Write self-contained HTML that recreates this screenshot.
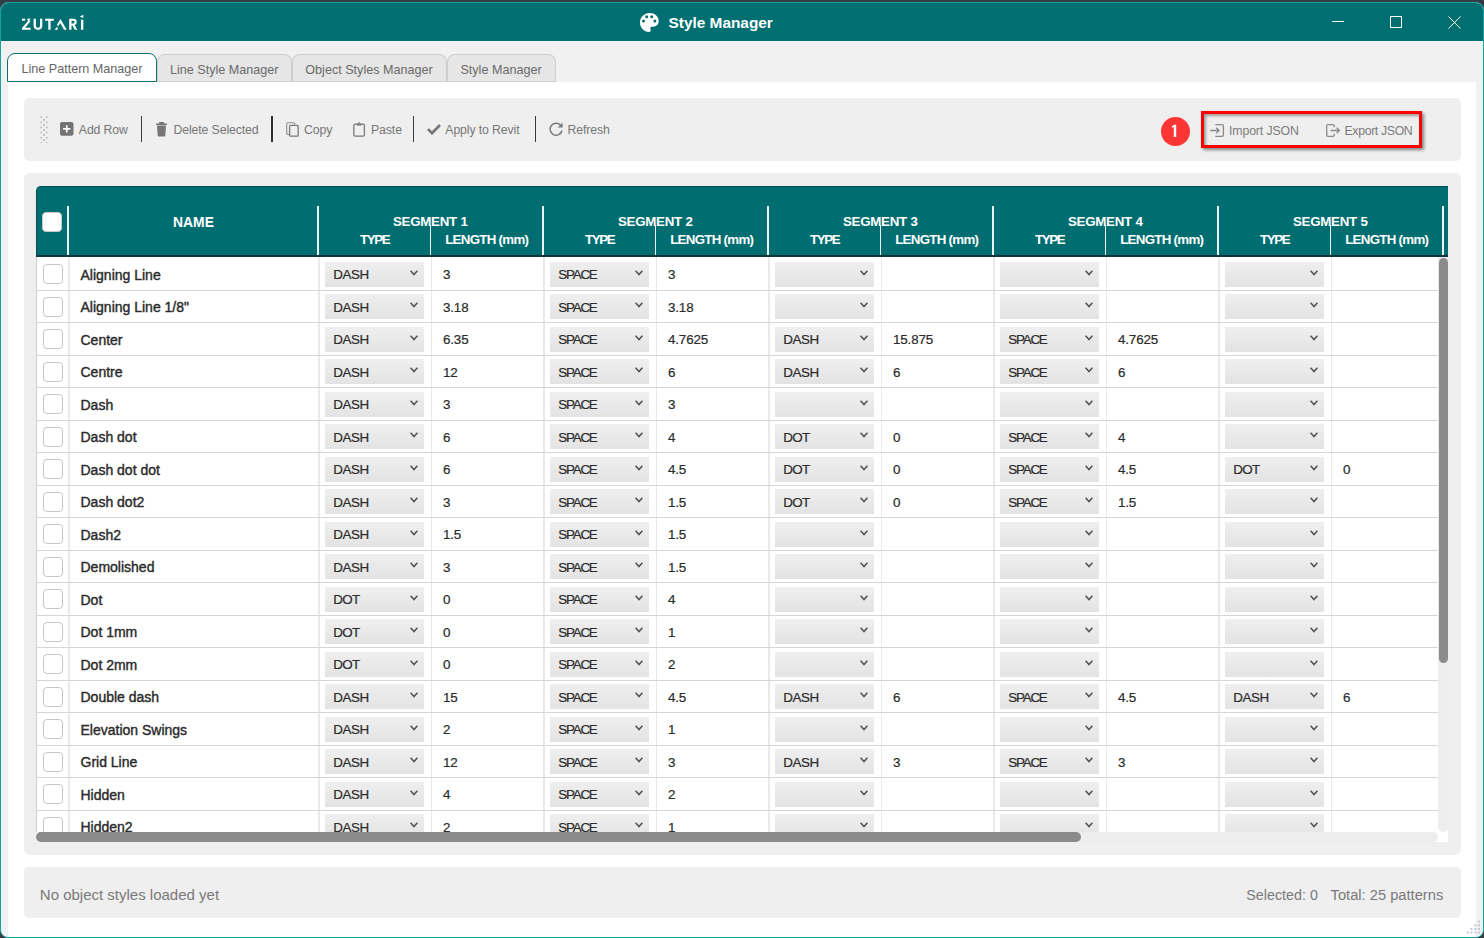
<!DOCTYPE html>
<html><head><meta charset="utf-8"><title>Style Manager</title>
<style>
*{box-sizing:border-box}
html,body{margin:0;padding:0}
body{width:1484px;height:938px;overflow:hidden;background:#363b44;position:relative;font-family:"Liberation Sans",sans-serif}
.abs{position:absolute}
#frame{position:absolute;left:0;top:2px;width:1484px;height:936px;border:1px solid #12a5a0;border-radius:8px;background:#f1f1f1;overflow:hidden}
#title{position:absolute;left:0;top:0;width:1482px;height:37.6px;background:#006f72}
.ttext{position:absolute;left:668.5px;top:13.8px;font-size:15.4px;font-weight:700;color:#fff;white-space:nowrap;line-height:18px}
.logo{position:absolute;left:21.5px;top:14.5px;font-size:15px;font-weight:700;color:#fff;letter-spacing:2.2px;line-height:18px}
.tab{position:absolute;top:53.5px;height:28px;background:#e6e6e6;border:1px solid #cdcdcd;border-bottom:1px solid #cfcfcf;border-radius:8px 8px 0 0;color:#6a6a6a;font-size:12.6px;white-space:nowrap;line-height:30.2px;text-align:center}
.tab.sel{background:#fff;border:1.3px solid #0b7072;top:53px;height:29px;color:#666}
#panel{position:absolute;left:7px;top:79px;width:1468px;height:856px;background:#fff}
.gp{position:absolute;left:24px;width:1436px;background:#efefef;border-radius:5px}
.tb{position:absolute;top:121.8px;font-size:12.3px;letter-spacing:-0.12px;color:#777;white-space:nowrap;line-height:16px}
.sep{position:absolute;top:116px;width:1.2px;height:26px;background:#3a3a3a}
#hdr{position:absolute;left:36.0px;top:186px;width:1412.0px;height:71px;background:#006e71;border-top:1.3px solid #0c4d52;border-left:1px solid #0c4d52;border-bottom:2px solid #10343c;border-radius:5px 0 0 0;overflow:hidden}
.ht{position:absolute;text-align:center;color:#fff;font-weight:700;font-size:13px;line-height:14px;white-space:nowrap}
.hvl{position:absolute;width:1.5px;background:#eaf3f3}
.hcb{position:absolute;left:5.200000000000003px;top:24.69999999999999px;width:20px;height:20px;background:#fff;border:1px solid #c8c8c8;border-radius:4px}
#body{position:absolute;left:36.0px;top:257px;width:1402.0px;height:575px;background:#fff;overflow:hidden}
.row{position:absolute;left:0;width:1402.0px;height:32.5px;border-bottom:1.2px solid #d6d6d6}
.vl{position:absolute;top:0;width:1.5px;height:575px;background:#e9e9e9}
.cb{position:absolute;width:20px;height:20px;border:1px solid #c6c6c6;border-radius:4px;background:#fff}
.nm{position:absolute;top:8.8px;font-size:14px;letter-spacing:0px;font-weight:400;color:#2b2b2b;-webkit-text-stroke:0.4px #2b2b2b;white-space:nowrap;line-height:16px}
.dd{position:absolute;top:3.8px;width:99px;height:25px;background:linear-gradient(#efefef,#e3e3e3)}
.dd span{position:absolute;left:8.2px;top:5.3px;font-size:13.4px;color:#2b2b2b;-webkit-text-stroke:0.2px #2b2b2b;line-height:16px}
.chev{position:absolute;left:85px;top:7.8px}
.ln{position:absolute;top:9.1px;font-size:13.4px;color:#2b2b2b;-webkit-text-stroke:0.2px #2b2b2b;letter-spacing:-0.15px;line-height:16px;white-space:nowrap}
.st{position:absolute;top:886.2px;font-size:15px;color:#7a7a7a;white-space:nowrap;line-height:18px}
</style></head><body>
<div id="frame">
  <div id="title"></div>
  <div id="panel"></div>
</div>
<svg style="position:absolute;left:639.8px;top:12.8px" width="19" height="19" viewBox="0 0 19 19"><path fill="#fff" fill-rule="evenodd" d="M9.5 0C14.7 0 18.7 3.4 18.7 7.8C18.7 11.3 16.5 13.7 13 13.7L11.6 13.7C10.8 13.7 10.3 14.2 10.3 15C10.3 15.6 10.7 16.3 10.7 17.3C10.7 18.5 10 19 9 19C4 19 0 14.7 0 9.5C0 4.3 4.3 0 9.5 0Z M8.2 3.8A1.5 1.5 0 1 0 5.2 3.8A1.5 1.5 0 1 0 8.2 3.8Z M13.2 3.8A1.5 1.5 0 1 0 10.2 3.8A1.5 1.5 0 1 0 13.2 3.8Z M5 8A1.5 1.5 0 1 0 2 8A1.5 1.5 0 1 0 5 8Z M16.4 8A1.5 1.5 0 1 0 13.4 8A1.5 1.5 0 1 0 16.4 8Z"/></svg>
<svg class="abs" style="left:0;top:0" width="100" height="40" viewBox="0 0 100 40"><g fill="#fff">
<rect x="22" y="18.7" width="3.2" height="2"/>
<path d="M26.9 18.7H30.6L28.7 21.8Z"/>
<path d="M30.6 20.9L25.2 27.7H30.6V29.8H22V28.1L27.9 20.9Z"/>
<path d="M33.6 18.7H35.9V25.8Q35.9 27.7 37.95 27.7Q40 27.7 40 25.8V18.7H42.3V25.8Q42.3 29.9 37.95 29.9Q33.6 29.9 33.6 25.8Z"/>
<path d="M45.1 18.7H53.8V20.8H50.6V29.8H48.3V20.8H45.1Z"/>
<path d="M54.6 29.8H57.9L57.3 26.5Z"/>
<path d="M60.5 18.9L66.7 29.8H64.1L60.2 22.9L58.1 26.3L57 24.6Z"/>
<path d="M69.2 18.7H73.4Q76.8 18.7 76.8 21.9Q76.8 24.3 74.6 25.1L77.3 29.8H74.8L72.5 25.4H71.5V29.8H69.2ZM71.5 20.7V23.4H73.3Q74.5 23.4 74.5 22.05Q74.5 20.7 73.3 20.7Z"/>
<rect x="81" y="19.7" width="2.3" height="10.1"/>
<path d="M83.3 14.7V18.1L79.8 16.6Z"/>
</g></svg>
<div class="ttext">Style Manager</div>
<div class="abs" style="left:1332px;top:20.8px;width:12px;height:1px;background:#fff"></div>
<div class="abs" style="left:1390px;top:16px;width:12px;height:12px;border:1px solid #fff"></div>
<svg class="abs" style="left:1447.5px;top:15.5px" width="13" height="13" viewBox="0 0 13 13"><path d="M0.5 0.5L12.5 12.5M12.5 0.5L0.5 12.5" stroke="#fff" stroke-width="1"/></svg>

<div class="tab" style="left:157px;width:134.5px">Line Style Manager</div>
<div class="tab" style="left:291.5px;width:155px">Object Styles Manager</div>
<div class="tab" style="left:446.5px;width:109px">Style Manager</div>
<div class="tab sel" style="left:7px;width:150px">Line Pattern Manager</div>

<div class="gp" style="top:98px;height:62.5px;width:1436.5px"></div>
<div class="gp" style="top:173px;height:681.5px;width:1436.8px;border-radius:6px"></div>
<div class="gp" style="top:867.2px;height:50.5px;width:1436.5px"></div>

<!-- toolbar -->
<svg class="abs" style="left:40px;top:116px" width="8" height="27" viewBox="0 0 8 27">
<rect x="0.5" y="0.5" width="1.5" height="1.5" fill="#b5b5b5"/><rect x="6" y="0.5" width="1.5" height="1.5" fill="#b5b5b5"/><rect x="3.5" y="3.05" width="1.5" height="1.5" fill="#b5b5b5"/><rect x="3.5" y="3.05" width="1.5" height="1.5" fill="#b5b5b5"/><rect x="0.5" y="5.6" width="1.5" height="1.5" fill="#b5b5b5"/><rect x="6" y="5.6" width="1.5" height="1.5" fill="#b5b5b5"/><rect x="3.5" y="8.149999999999999" width="1.5" height="1.5" fill="#b5b5b5"/><rect x="3.5" y="8.149999999999999" width="1.5" height="1.5" fill="#b5b5b5"/><rect x="0.5" y="10.7" width="1.5" height="1.5" fill="#b5b5b5"/><rect x="6" y="10.7" width="1.5" height="1.5" fill="#b5b5b5"/><rect x="3.5" y="13.25" width="1.5" height="1.5" fill="#b5b5b5"/><rect x="3.5" y="13.25" width="1.5" height="1.5" fill="#b5b5b5"/><rect x="0.5" y="15.799999999999999" width="1.5" height="1.5" fill="#b5b5b5"/><rect x="6" y="15.799999999999999" width="1.5" height="1.5" fill="#b5b5b5"/><rect x="3.5" y="18.349999999999998" width="1.5" height="1.5" fill="#b5b5b5"/><rect x="3.5" y="18.349999999999998" width="1.5" height="1.5" fill="#b5b5b5"/><rect x="0.5" y="20.9" width="1.5" height="1.5" fill="#b5b5b5"/><rect x="6" y="20.9" width="1.5" height="1.5" fill="#b5b5b5"/><rect x="3.5" y="23.45" width="1.5" height="1.5" fill="#b5b5b5"/><rect x="3.5" y="23.45" width="1.5" height="1.5" fill="#b5b5b5"/><rect x="0.5" y="26.0" width="1.5" height="1.5" fill="#b5b5b5"/><rect x="6" y="26.0" width="1.5" height="1.5" fill="#b5b5b5"/>
</svg>
<svg class="abs" style="left:60px;top:122px" width="14" height="14" viewBox="0 0 14 14"><rect x="0" y="0" width="13.5" height="13.7" rx="2" fill="#737373"/><path d="M6.75 3.2V10.5M3.1 6.85H10.4" stroke="#fff" stroke-width="1.6"/></svg>
<div class="tb" style="left:78.8px">Add Row</div>
<div class="sep" style="left:141px"></div>
<svg class="abs" style="left:156px;top:121.5px" width="12" height="15" viewBox="0 0 12 15"><path d="M0 2.2H11M3.8 2V0.8H7.2V2" stroke="#767676" stroke-width="1.4" fill="none"/><path d="M1 3.6H10L9.3 13.4Q9.2 14.5 8.2 14.5H2.8Q1.8 14.5 1.7 13.4Z" fill="#767676"/></svg>
<div class="tb" style="left:173.5px">Delete Selected</div>
<div class="sep" style="left:271px;width:2px;background:#2f2f2f"></div>
<svg class="abs" style="left:285.5px;top:121.5px" width="13" height="15" viewBox="0 0 13 15"><path d="M3.2 12.5H2Q0.7 12.5 0.7 11.2V2Q0.7 0.7 2 0.7H7.5Q8.8 0.7 8.8 2V2.8" fill="none" stroke="#8c8c8c" stroke-width="1.1"/><rect x="3.6" y="3.4" width="8.6" height="10.8" rx="1.3" fill="none" stroke="#7a7a7a" stroke-width="1.3"/></svg>
<div class="tb" style="left:304px">Copy</div>
<svg class="abs" style="left:353px;top:121.5px" width="13" height="15" viewBox="0 0 13 15"><rect x="0.8" y="2.2" width="10.6" height="11.9" rx="1.4" fill="none" stroke="#7a7a7a" stroke-width="1.3"/><path d="M3.8 1.6H8.4V3.6H3.8Z" fill="#7a7a7a"/><path d="M5.2 1.2Q6.1 0 7 1.2" stroke="#7a7a7a" stroke-width="1" fill="none"/></svg>
<div class="tb" style="left:371px">Paste</div>
<div class="sep" style="left:413px"></div>
<svg class="abs" style="left:426.5px;top:123.5px" width="14" height="11" viewBox="0 0 14 11"><path d="M1 5.2L5 9.2L13 1" fill="none" stroke="#757575" stroke-width="2.6"/></svg>
<div class="tb" style="left:445.3px">Apply to Revit</div>
<div class="sep" style="left:535px"></div>
<svg class="abs" style="left:548.5px;top:122.3px" width="15" height="15" viewBox="0 0 15 15"><path d="M12.3 4.2A6 6 0 1 0 13 8.5" fill="none" stroke="#7a7a7a" stroke-width="1.5"/><path d="M13.6 0.6V5.6H8.6Z" fill="#7a7a7a"/></svg>
<div class="tb" style="left:567.6px">Refresh</div>

<!-- import / export -->
<div class="abs" style="left:1160.8px;top:116.8px;width:29.5px;height:29.5px;border-radius:50%;background:#fd3535"></div>
<svg class="abs" style="left:1160px;top:116px" width="30" height="30" viewBox="0 0 30 30"><path fill="#fff" d="M13.8 8.7H16.2V21.1H13.8V11.1Q12.9 11.7 11.9 11.8V10.2Q13.2 9.9 13.8 8.7Z"/></svg>
<div class="abs" style="left:1201px;top:111px;width:221px;height:37px;border:3px solid #ff0000;box-shadow:2px 2px 3px rgba(0,0,0,.45), inset 2px 2px 3px rgba(0,0,0,.35)"></div>
<svg class="abs" style="left:1210px;top:123.5px" width="15" height="13" viewBox="0 0 15 13"><path d="M5.3 0.7H12Q13.4 0.7 13.4 2.1V10.9Q13.4 12.3 12 12.3H5.3" fill="none" stroke="#8a8a8a" stroke-width="1.3"/><path d="M0.2 6.5H9M6.3 3.7L9.1 6.5L6.3 9.3" fill="none" stroke="#8a8a8a" stroke-width="1.3"/></svg>
<div class="tb" style="left:1229px;top:122.6px;color:#7c7c7c">Import JSON</div>
<svg class="abs" style="left:1325.5px;top:123.5px" width="15" height="13" viewBox="0 0 15 13"><path d="M8.2 3.2V2.1Q8.2 0.7 6.8 0.7H2.1Q0.7 0.7 0.7 2.1V10.9Q0.7 12.3 2.1 12.3H6.8Q8.2 12.3 8.2 10.9V9.8" fill="none" stroke="#8a8a8a" stroke-width="1.3"/><path d="M4.6 6.5H13.4M10.7 3.7L13.5 6.5L10.7 9.3" fill="none" stroke="#8a8a8a" stroke-width="1.3"/></svg>
<div class="tb" style="left:1344.5px;top:122.6px;color:#7c7c7c;letter-spacing:-0.35px">Export JSON</div>

<!-- table header -->
<div id="hdr">
<div class="hcb"></div><div class="hvl" style="left:30.4px;top:18.69999999999999px;height:49.5px"></div><div class="ht" style="left:31.5px;width:250.0px;top:27.49999999999999px;font-size:13.9px">NAME</div><div class="hvl" style="left:280.4px;top:18.69999999999999px;height:49.5px"></div><div class="hvl" style="left:392.9px;top:38.19999999999999px;height:30.0px"></div><div class="ht" style="left:281.5px;width:225.0px;top:28.399999999999977px;font-size:13.3px;letter-spacing:-0.25px;text-indent:-1.5px">SEGMENT 1</div><div class="ht sub" style="left:281.5px;width:112.5px;top:46.19999999999999px;font-size:13.3px;letter-spacing:-1.3px;text-indent:-0.2px">TYPE</div><div class="ht sub" style="left:394.0px;width:112.5px;top:46.19999999999999px;font-size:13.3px;letter-spacing:-0.7px;text-indent:-1px">LENGTH (mm)</div><div class="hvl" style="left:505.4px;top:18.69999999999999px;height:49.5px"></div><div class="hvl" style="left:617.9px;top:38.19999999999999px;height:30.0px"></div><div class="ht" style="left:506.5px;width:225.0px;top:28.399999999999977px;font-size:13.3px;letter-spacing:-0.25px;text-indent:-1.5px">SEGMENT 2</div><div class="ht sub" style="left:506.5px;width:112.5px;top:46.19999999999999px;font-size:13.3px;letter-spacing:-1.3px;text-indent:-0.2px">TYPE</div><div class="ht sub" style="left:619.0px;width:112.5px;top:46.19999999999999px;font-size:13.3px;letter-spacing:-0.7px;text-indent:-1px">LENGTH (mm)</div><div class="hvl" style="left:730.4px;top:18.69999999999999px;height:49.5px"></div><div class="hvl" style="left:842.9px;top:38.19999999999999px;height:30.0px"></div><div class="ht" style="left:731.5px;width:225.0px;top:28.399999999999977px;font-size:13.3px;letter-spacing:-0.25px;text-indent:-1.5px">SEGMENT 3</div><div class="ht sub" style="left:731.5px;width:112.5px;top:46.19999999999999px;font-size:13.3px;letter-spacing:-1.3px;text-indent:-0.2px">TYPE</div><div class="ht sub" style="left:844.0px;width:112.5px;top:46.19999999999999px;font-size:13.3px;letter-spacing:-0.7px;text-indent:-1px">LENGTH (mm)</div><div class="hvl" style="left:955.4px;top:18.69999999999999px;height:49.5px"></div><div class="hvl" style="left:1067.9px;top:38.19999999999999px;height:30.0px"></div><div class="ht" style="left:956.5px;width:225.0px;top:28.399999999999977px;font-size:13.3px;letter-spacing:-0.25px;text-indent:-1.5px">SEGMENT 4</div><div class="ht sub" style="left:956.5px;width:112.5px;top:46.19999999999999px;font-size:13.3px;letter-spacing:-1.3px;text-indent:-0.2px">TYPE</div><div class="ht sub" style="left:1069.0px;width:112.5px;top:46.19999999999999px;font-size:13.3px;letter-spacing:-0.7px;text-indent:-1px">LENGTH (mm)</div><div class="hvl" style="left:1180.4px;top:18.69999999999999px;height:49.5px"></div><div class="hvl" style="left:1292.9px;top:38.19999999999999px;height:30.0px"></div><div class="ht" style="left:1181.5px;width:225.0px;top:28.399999999999977px;font-size:13.3px;letter-spacing:-0.25px;text-indent:-1.5px">SEGMENT 5</div><div class="ht sub" style="left:1181.5px;width:112.5px;top:46.19999999999999px;font-size:13.3px;letter-spacing:-1.3px;text-indent:-0.2px">TYPE</div><div class="ht sub" style="left:1294.0px;width:112.5px;top:46.19999999999999px;font-size:13.3px;letter-spacing:-0.7px;text-indent:-1px">LENGTH (mm)</div><div class="hvl" style="left:1405.4px;top:18.69999999999999px;height:49.5px"></div>
</div>
<!-- table body -->
<div id="body">
<div class="vl" style="left:0;width:1px;background:#d0d0d0"></div><div class="vl" style="left:32.0px"></div><div class="vl" style="left:282.0px"></div><div class="vl" style="left:394.5px"></div><div class="vl" style="left:507.0px"></div><div class="vl" style="left:619.5px"></div><div class="vl" style="left:732.0px"></div><div class="vl" style="left:844.5px"></div><div class="vl" style="left:957.0px"></div><div class="vl" style="left:1069.5px"></div><div class="vl" style="left:1182.0px"></div><div class="vl" style="left:1294.5px"></div><div class="vl" style="left:1407.0px"></div>
<div class="row" style="top:1.0px"><div class="cb" style="left:7.200000000000003px;top:6px"></div><div class="nm" style="left:44.5px">Aligning Line</div><div class="dd" style="left:289.0px"><span style="letter-spacing:-0.43px">DASH</span><svg class="chev" width="8" height="6" viewBox="0 0 8 6"><path d="M0.6 0.8 L4 4.6 L7.4 0.8" fill="none" stroke="#555" stroke-width="1.6"/></svg></div><div class="ln" style="left:407.0px">3</div><div class="dd" style="left:514.0px"><span style="letter-spacing:-1.2px">SPACE</span><svg class="chev" width="8" height="6" viewBox="0 0 8 6"><path d="M0.6 0.8 L4 4.6 L7.4 0.8" fill="none" stroke="#555" stroke-width="1.6"/></svg></div><div class="ln" style="left:632.0px">3</div><div class="dd" style="left:739.0px"><span style="letter-spacing:0px"></span><svg class="chev" width="8" height="6" viewBox="0 0 8 6"><path d="M0.6 0.8 L4 4.6 L7.4 0.8" fill="none" stroke="#555" stroke-width="1.6"/></svg></div><div class="dd" style="left:964.0px"><span style="letter-spacing:0px"></span><svg class="chev" width="8" height="6" viewBox="0 0 8 6"><path d="M0.6 0.8 L4 4.6 L7.4 0.8" fill="none" stroke="#555" stroke-width="1.6"/></svg></div><div class="dd" style="left:1189.0px"><span style="letter-spacing:0px"></span><svg class="chev" width="8" height="6" viewBox="0 0 8 6"><path d="M0.6 0.8 L4 4.6 L7.4 0.8" fill="none" stroke="#555" stroke-width="1.6"/></svg></div></div><div class="row" style="top:33.5px"><div class="cb" style="left:7.200000000000003px;top:6px"></div><div class="nm" style="left:44.5px">Aligning Line 1/8&quot;</div><div class="dd" style="left:289.0px"><span style="letter-spacing:-0.43px">DASH</span><svg class="chev" width="8" height="6" viewBox="0 0 8 6"><path d="M0.6 0.8 L4 4.6 L7.4 0.8" fill="none" stroke="#555" stroke-width="1.6"/></svg></div><div class="ln" style="left:407.0px">3.18</div><div class="dd" style="left:514.0px"><span style="letter-spacing:-1.2px">SPACE</span><svg class="chev" width="8" height="6" viewBox="0 0 8 6"><path d="M0.6 0.8 L4 4.6 L7.4 0.8" fill="none" stroke="#555" stroke-width="1.6"/></svg></div><div class="ln" style="left:632.0px">3.18</div><div class="dd" style="left:739.0px"><span style="letter-spacing:0px"></span><svg class="chev" width="8" height="6" viewBox="0 0 8 6"><path d="M0.6 0.8 L4 4.6 L7.4 0.8" fill="none" stroke="#555" stroke-width="1.6"/></svg></div><div class="dd" style="left:964.0px"><span style="letter-spacing:0px"></span><svg class="chev" width="8" height="6" viewBox="0 0 8 6"><path d="M0.6 0.8 L4 4.6 L7.4 0.8" fill="none" stroke="#555" stroke-width="1.6"/></svg></div><div class="dd" style="left:1189.0px"><span style="letter-spacing:0px"></span><svg class="chev" width="8" height="6" viewBox="0 0 8 6"><path d="M0.6 0.8 L4 4.6 L7.4 0.8" fill="none" stroke="#555" stroke-width="1.6"/></svg></div></div><div class="row" style="top:66.0px"><div class="cb" style="left:7.200000000000003px;top:6px"></div><div class="nm" style="left:44.5px">Center</div><div class="dd" style="left:289.0px"><span style="letter-spacing:-0.43px">DASH</span><svg class="chev" width="8" height="6" viewBox="0 0 8 6"><path d="M0.6 0.8 L4 4.6 L7.4 0.8" fill="none" stroke="#555" stroke-width="1.6"/></svg></div><div class="ln" style="left:407.0px">6.35</div><div class="dd" style="left:514.0px"><span style="letter-spacing:-1.2px">SPACE</span><svg class="chev" width="8" height="6" viewBox="0 0 8 6"><path d="M0.6 0.8 L4 4.6 L7.4 0.8" fill="none" stroke="#555" stroke-width="1.6"/></svg></div><div class="ln" style="left:632.0px">4.7625</div><div class="dd" style="left:739.0px"><span style="letter-spacing:-0.43px">DASH</span><svg class="chev" width="8" height="6" viewBox="0 0 8 6"><path d="M0.6 0.8 L4 4.6 L7.4 0.8" fill="none" stroke="#555" stroke-width="1.6"/></svg></div><div class="ln" style="left:857.0px">15.875</div><div class="dd" style="left:964.0px"><span style="letter-spacing:-1.2px">SPACE</span><svg class="chev" width="8" height="6" viewBox="0 0 8 6"><path d="M0.6 0.8 L4 4.6 L7.4 0.8" fill="none" stroke="#555" stroke-width="1.6"/></svg></div><div class="ln" style="left:1082.0px">4.7625</div><div class="dd" style="left:1189.0px"><span style="letter-spacing:0px"></span><svg class="chev" width="8" height="6" viewBox="0 0 8 6"><path d="M0.6 0.8 L4 4.6 L7.4 0.8" fill="none" stroke="#555" stroke-width="1.6"/></svg></div></div><div class="row" style="top:98.5px"><div class="cb" style="left:7.200000000000003px;top:6px"></div><div class="nm" style="left:44.5px">Centre</div><div class="dd" style="left:289.0px"><span style="letter-spacing:-0.43px">DASH</span><svg class="chev" width="8" height="6" viewBox="0 0 8 6"><path d="M0.6 0.8 L4 4.6 L7.4 0.8" fill="none" stroke="#555" stroke-width="1.6"/></svg></div><div class="ln" style="left:407.0px">12</div><div class="dd" style="left:514.0px"><span style="letter-spacing:-1.2px">SPACE</span><svg class="chev" width="8" height="6" viewBox="0 0 8 6"><path d="M0.6 0.8 L4 4.6 L7.4 0.8" fill="none" stroke="#555" stroke-width="1.6"/></svg></div><div class="ln" style="left:632.0px">6</div><div class="dd" style="left:739.0px"><span style="letter-spacing:-0.43px">DASH</span><svg class="chev" width="8" height="6" viewBox="0 0 8 6"><path d="M0.6 0.8 L4 4.6 L7.4 0.8" fill="none" stroke="#555" stroke-width="1.6"/></svg></div><div class="ln" style="left:857.0px">6</div><div class="dd" style="left:964.0px"><span style="letter-spacing:-1.2px">SPACE</span><svg class="chev" width="8" height="6" viewBox="0 0 8 6"><path d="M0.6 0.8 L4 4.6 L7.4 0.8" fill="none" stroke="#555" stroke-width="1.6"/></svg></div><div class="ln" style="left:1082.0px">6</div><div class="dd" style="left:1189.0px"><span style="letter-spacing:0px"></span><svg class="chev" width="8" height="6" viewBox="0 0 8 6"><path d="M0.6 0.8 L4 4.6 L7.4 0.8" fill="none" stroke="#555" stroke-width="1.6"/></svg></div></div><div class="row" style="top:131.0px"><div class="cb" style="left:7.200000000000003px;top:6px"></div><div class="nm" style="left:44.5px">Dash</div><div class="dd" style="left:289.0px"><span style="letter-spacing:-0.43px">DASH</span><svg class="chev" width="8" height="6" viewBox="0 0 8 6"><path d="M0.6 0.8 L4 4.6 L7.4 0.8" fill="none" stroke="#555" stroke-width="1.6"/></svg></div><div class="ln" style="left:407.0px">3</div><div class="dd" style="left:514.0px"><span style="letter-spacing:-1.2px">SPACE</span><svg class="chev" width="8" height="6" viewBox="0 0 8 6"><path d="M0.6 0.8 L4 4.6 L7.4 0.8" fill="none" stroke="#555" stroke-width="1.6"/></svg></div><div class="ln" style="left:632.0px">3</div><div class="dd" style="left:739.0px"><span style="letter-spacing:0px"></span><svg class="chev" width="8" height="6" viewBox="0 0 8 6"><path d="M0.6 0.8 L4 4.6 L7.4 0.8" fill="none" stroke="#555" stroke-width="1.6"/></svg></div><div class="dd" style="left:964.0px"><span style="letter-spacing:0px"></span><svg class="chev" width="8" height="6" viewBox="0 0 8 6"><path d="M0.6 0.8 L4 4.6 L7.4 0.8" fill="none" stroke="#555" stroke-width="1.6"/></svg></div><div class="dd" style="left:1189.0px"><span style="letter-spacing:0px"></span><svg class="chev" width="8" height="6" viewBox="0 0 8 6"><path d="M0.6 0.8 L4 4.6 L7.4 0.8" fill="none" stroke="#555" stroke-width="1.6"/></svg></div></div><div class="row" style="top:163.5px"><div class="cb" style="left:7.200000000000003px;top:6px"></div><div class="nm" style="left:44.5px">Dash dot</div><div class="dd" style="left:289.0px"><span style="letter-spacing:-0.43px">DASH</span><svg class="chev" width="8" height="6" viewBox="0 0 8 6"><path d="M0.6 0.8 L4 4.6 L7.4 0.8" fill="none" stroke="#555" stroke-width="1.6"/></svg></div><div class="ln" style="left:407.0px">6</div><div class="dd" style="left:514.0px"><span style="letter-spacing:-1.2px">SPACE</span><svg class="chev" width="8" height="6" viewBox="0 0 8 6"><path d="M0.6 0.8 L4 4.6 L7.4 0.8" fill="none" stroke="#555" stroke-width="1.6"/></svg></div><div class="ln" style="left:632.0px">4</div><div class="dd" style="left:739.0px"><span style="letter-spacing:-0.6px">DOT</span><svg class="chev" width="8" height="6" viewBox="0 0 8 6"><path d="M0.6 0.8 L4 4.6 L7.4 0.8" fill="none" stroke="#555" stroke-width="1.6"/></svg></div><div class="ln" style="left:857.0px">0</div><div class="dd" style="left:964.0px"><span style="letter-spacing:-1.2px">SPACE</span><svg class="chev" width="8" height="6" viewBox="0 0 8 6"><path d="M0.6 0.8 L4 4.6 L7.4 0.8" fill="none" stroke="#555" stroke-width="1.6"/></svg></div><div class="ln" style="left:1082.0px">4</div><div class="dd" style="left:1189.0px"><span style="letter-spacing:0px"></span><svg class="chev" width="8" height="6" viewBox="0 0 8 6"><path d="M0.6 0.8 L4 4.6 L7.4 0.8" fill="none" stroke="#555" stroke-width="1.6"/></svg></div></div><div class="row" style="top:196.0px"><div class="cb" style="left:7.200000000000003px;top:6px"></div><div class="nm" style="left:44.5px">Dash dot dot</div><div class="dd" style="left:289.0px"><span style="letter-spacing:-0.43px">DASH</span><svg class="chev" width="8" height="6" viewBox="0 0 8 6"><path d="M0.6 0.8 L4 4.6 L7.4 0.8" fill="none" stroke="#555" stroke-width="1.6"/></svg></div><div class="ln" style="left:407.0px">6</div><div class="dd" style="left:514.0px"><span style="letter-spacing:-1.2px">SPACE</span><svg class="chev" width="8" height="6" viewBox="0 0 8 6"><path d="M0.6 0.8 L4 4.6 L7.4 0.8" fill="none" stroke="#555" stroke-width="1.6"/></svg></div><div class="ln" style="left:632.0px">4.5</div><div class="dd" style="left:739.0px"><span style="letter-spacing:-0.6px">DOT</span><svg class="chev" width="8" height="6" viewBox="0 0 8 6"><path d="M0.6 0.8 L4 4.6 L7.4 0.8" fill="none" stroke="#555" stroke-width="1.6"/></svg></div><div class="ln" style="left:857.0px">0</div><div class="dd" style="left:964.0px"><span style="letter-spacing:-1.2px">SPACE</span><svg class="chev" width="8" height="6" viewBox="0 0 8 6"><path d="M0.6 0.8 L4 4.6 L7.4 0.8" fill="none" stroke="#555" stroke-width="1.6"/></svg></div><div class="ln" style="left:1082.0px">4.5</div><div class="dd" style="left:1189.0px"><span style="letter-spacing:-0.6px">DOT</span><svg class="chev" width="8" height="6" viewBox="0 0 8 6"><path d="M0.6 0.8 L4 4.6 L7.4 0.8" fill="none" stroke="#555" stroke-width="1.6"/></svg></div><div class="ln" style="left:1307.0px">0</div></div><div class="row" style="top:228.5px"><div class="cb" style="left:7.200000000000003px;top:6px"></div><div class="nm" style="left:44.5px">Dash dot2</div><div class="dd" style="left:289.0px"><span style="letter-spacing:-0.43px">DASH</span><svg class="chev" width="8" height="6" viewBox="0 0 8 6"><path d="M0.6 0.8 L4 4.6 L7.4 0.8" fill="none" stroke="#555" stroke-width="1.6"/></svg></div><div class="ln" style="left:407.0px">3</div><div class="dd" style="left:514.0px"><span style="letter-spacing:-1.2px">SPACE</span><svg class="chev" width="8" height="6" viewBox="0 0 8 6"><path d="M0.6 0.8 L4 4.6 L7.4 0.8" fill="none" stroke="#555" stroke-width="1.6"/></svg></div><div class="ln" style="left:632.0px">1.5</div><div class="dd" style="left:739.0px"><span style="letter-spacing:-0.6px">DOT</span><svg class="chev" width="8" height="6" viewBox="0 0 8 6"><path d="M0.6 0.8 L4 4.6 L7.4 0.8" fill="none" stroke="#555" stroke-width="1.6"/></svg></div><div class="ln" style="left:857.0px">0</div><div class="dd" style="left:964.0px"><span style="letter-spacing:-1.2px">SPACE</span><svg class="chev" width="8" height="6" viewBox="0 0 8 6"><path d="M0.6 0.8 L4 4.6 L7.4 0.8" fill="none" stroke="#555" stroke-width="1.6"/></svg></div><div class="ln" style="left:1082.0px">1.5</div><div class="dd" style="left:1189.0px"><span style="letter-spacing:0px"></span><svg class="chev" width="8" height="6" viewBox="0 0 8 6"><path d="M0.6 0.8 L4 4.6 L7.4 0.8" fill="none" stroke="#555" stroke-width="1.6"/></svg></div></div><div class="row" style="top:261.0px"><div class="cb" style="left:7.200000000000003px;top:6px"></div><div class="nm" style="left:44.5px">Dash2</div><div class="dd" style="left:289.0px"><span style="letter-spacing:-0.43px">DASH</span><svg class="chev" width="8" height="6" viewBox="0 0 8 6"><path d="M0.6 0.8 L4 4.6 L7.4 0.8" fill="none" stroke="#555" stroke-width="1.6"/></svg></div><div class="ln" style="left:407.0px">1.5</div><div class="dd" style="left:514.0px"><span style="letter-spacing:-1.2px">SPACE</span><svg class="chev" width="8" height="6" viewBox="0 0 8 6"><path d="M0.6 0.8 L4 4.6 L7.4 0.8" fill="none" stroke="#555" stroke-width="1.6"/></svg></div><div class="ln" style="left:632.0px">1.5</div><div class="dd" style="left:739.0px"><span style="letter-spacing:0px"></span><svg class="chev" width="8" height="6" viewBox="0 0 8 6"><path d="M0.6 0.8 L4 4.6 L7.4 0.8" fill="none" stroke="#555" stroke-width="1.6"/></svg></div><div class="dd" style="left:964.0px"><span style="letter-spacing:0px"></span><svg class="chev" width="8" height="6" viewBox="0 0 8 6"><path d="M0.6 0.8 L4 4.6 L7.4 0.8" fill="none" stroke="#555" stroke-width="1.6"/></svg></div><div class="dd" style="left:1189.0px"><span style="letter-spacing:0px"></span><svg class="chev" width="8" height="6" viewBox="0 0 8 6"><path d="M0.6 0.8 L4 4.6 L7.4 0.8" fill="none" stroke="#555" stroke-width="1.6"/></svg></div></div><div class="row" style="top:293.5px"><div class="cb" style="left:7.200000000000003px;top:6px"></div><div class="nm" style="left:44.5px">Demolished</div><div class="dd" style="left:289.0px"><span style="letter-spacing:-0.43px">DASH</span><svg class="chev" width="8" height="6" viewBox="0 0 8 6"><path d="M0.6 0.8 L4 4.6 L7.4 0.8" fill="none" stroke="#555" stroke-width="1.6"/></svg></div><div class="ln" style="left:407.0px">3</div><div class="dd" style="left:514.0px"><span style="letter-spacing:-1.2px">SPACE</span><svg class="chev" width="8" height="6" viewBox="0 0 8 6"><path d="M0.6 0.8 L4 4.6 L7.4 0.8" fill="none" stroke="#555" stroke-width="1.6"/></svg></div><div class="ln" style="left:632.0px">1.5</div><div class="dd" style="left:739.0px"><span style="letter-spacing:0px"></span><svg class="chev" width="8" height="6" viewBox="0 0 8 6"><path d="M0.6 0.8 L4 4.6 L7.4 0.8" fill="none" stroke="#555" stroke-width="1.6"/></svg></div><div class="dd" style="left:964.0px"><span style="letter-spacing:0px"></span><svg class="chev" width="8" height="6" viewBox="0 0 8 6"><path d="M0.6 0.8 L4 4.6 L7.4 0.8" fill="none" stroke="#555" stroke-width="1.6"/></svg></div><div class="dd" style="left:1189.0px"><span style="letter-spacing:0px"></span><svg class="chev" width="8" height="6" viewBox="0 0 8 6"><path d="M0.6 0.8 L4 4.6 L7.4 0.8" fill="none" stroke="#555" stroke-width="1.6"/></svg></div></div><div class="row" style="top:326.0px"><div class="cb" style="left:7.200000000000003px;top:6px"></div><div class="nm" style="left:44.5px">Dot</div><div class="dd" style="left:289.0px"><span style="letter-spacing:-0.6px">DOT</span><svg class="chev" width="8" height="6" viewBox="0 0 8 6"><path d="M0.6 0.8 L4 4.6 L7.4 0.8" fill="none" stroke="#555" stroke-width="1.6"/></svg></div><div class="ln" style="left:407.0px">0</div><div class="dd" style="left:514.0px"><span style="letter-spacing:-1.2px">SPACE</span><svg class="chev" width="8" height="6" viewBox="0 0 8 6"><path d="M0.6 0.8 L4 4.6 L7.4 0.8" fill="none" stroke="#555" stroke-width="1.6"/></svg></div><div class="ln" style="left:632.0px">4</div><div class="dd" style="left:739.0px"><span style="letter-spacing:0px"></span><svg class="chev" width="8" height="6" viewBox="0 0 8 6"><path d="M0.6 0.8 L4 4.6 L7.4 0.8" fill="none" stroke="#555" stroke-width="1.6"/></svg></div><div class="dd" style="left:964.0px"><span style="letter-spacing:0px"></span><svg class="chev" width="8" height="6" viewBox="0 0 8 6"><path d="M0.6 0.8 L4 4.6 L7.4 0.8" fill="none" stroke="#555" stroke-width="1.6"/></svg></div><div class="dd" style="left:1189.0px"><span style="letter-spacing:0px"></span><svg class="chev" width="8" height="6" viewBox="0 0 8 6"><path d="M0.6 0.8 L4 4.6 L7.4 0.8" fill="none" stroke="#555" stroke-width="1.6"/></svg></div></div><div class="row" style="top:358.5px"><div class="cb" style="left:7.200000000000003px;top:6px"></div><div class="nm" style="left:44.5px">Dot 1mm</div><div class="dd" style="left:289.0px"><span style="letter-spacing:-0.6px">DOT</span><svg class="chev" width="8" height="6" viewBox="0 0 8 6"><path d="M0.6 0.8 L4 4.6 L7.4 0.8" fill="none" stroke="#555" stroke-width="1.6"/></svg></div><div class="ln" style="left:407.0px">0</div><div class="dd" style="left:514.0px"><span style="letter-spacing:-1.2px">SPACE</span><svg class="chev" width="8" height="6" viewBox="0 0 8 6"><path d="M0.6 0.8 L4 4.6 L7.4 0.8" fill="none" stroke="#555" stroke-width="1.6"/></svg></div><div class="ln" style="left:632.0px">1</div><div class="dd" style="left:739.0px"><span style="letter-spacing:0px"></span><svg class="chev" width="8" height="6" viewBox="0 0 8 6"><path d="M0.6 0.8 L4 4.6 L7.4 0.8" fill="none" stroke="#555" stroke-width="1.6"/></svg></div><div class="dd" style="left:964.0px"><span style="letter-spacing:0px"></span><svg class="chev" width="8" height="6" viewBox="0 0 8 6"><path d="M0.6 0.8 L4 4.6 L7.4 0.8" fill="none" stroke="#555" stroke-width="1.6"/></svg></div><div class="dd" style="left:1189.0px"><span style="letter-spacing:0px"></span><svg class="chev" width="8" height="6" viewBox="0 0 8 6"><path d="M0.6 0.8 L4 4.6 L7.4 0.8" fill="none" stroke="#555" stroke-width="1.6"/></svg></div></div><div class="row" style="top:391.0px"><div class="cb" style="left:7.200000000000003px;top:6px"></div><div class="nm" style="left:44.5px">Dot 2mm</div><div class="dd" style="left:289.0px"><span style="letter-spacing:-0.6px">DOT</span><svg class="chev" width="8" height="6" viewBox="0 0 8 6"><path d="M0.6 0.8 L4 4.6 L7.4 0.8" fill="none" stroke="#555" stroke-width="1.6"/></svg></div><div class="ln" style="left:407.0px">0</div><div class="dd" style="left:514.0px"><span style="letter-spacing:-1.2px">SPACE</span><svg class="chev" width="8" height="6" viewBox="0 0 8 6"><path d="M0.6 0.8 L4 4.6 L7.4 0.8" fill="none" stroke="#555" stroke-width="1.6"/></svg></div><div class="ln" style="left:632.0px">2</div><div class="dd" style="left:739.0px"><span style="letter-spacing:0px"></span><svg class="chev" width="8" height="6" viewBox="0 0 8 6"><path d="M0.6 0.8 L4 4.6 L7.4 0.8" fill="none" stroke="#555" stroke-width="1.6"/></svg></div><div class="dd" style="left:964.0px"><span style="letter-spacing:0px"></span><svg class="chev" width="8" height="6" viewBox="0 0 8 6"><path d="M0.6 0.8 L4 4.6 L7.4 0.8" fill="none" stroke="#555" stroke-width="1.6"/></svg></div><div class="dd" style="left:1189.0px"><span style="letter-spacing:0px"></span><svg class="chev" width="8" height="6" viewBox="0 0 8 6"><path d="M0.6 0.8 L4 4.6 L7.4 0.8" fill="none" stroke="#555" stroke-width="1.6"/></svg></div></div><div class="row" style="top:423.5px"><div class="cb" style="left:7.200000000000003px;top:6px"></div><div class="nm" style="left:44.5px">Double dash</div><div class="dd" style="left:289.0px"><span style="letter-spacing:-0.43px">DASH</span><svg class="chev" width="8" height="6" viewBox="0 0 8 6"><path d="M0.6 0.8 L4 4.6 L7.4 0.8" fill="none" stroke="#555" stroke-width="1.6"/></svg></div><div class="ln" style="left:407.0px">15</div><div class="dd" style="left:514.0px"><span style="letter-spacing:-1.2px">SPACE</span><svg class="chev" width="8" height="6" viewBox="0 0 8 6"><path d="M0.6 0.8 L4 4.6 L7.4 0.8" fill="none" stroke="#555" stroke-width="1.6"/></svg></div><div class="ln" style="left:632.0px">4.5</div><div class="dd" style="left:739.0px"><span style="letter-spacing:-0.43px">DASH</span><svg class="chev" width="8" height="6" viewBox="0 0 8 6"><path d="M0.6 0.8 L4 4.6 L7.4 0.8" fill="none" stroke="#555" stroke-width="1.6"/></svg></div><div class="ln" style="left:857.0px">6</div><div class="dd" style="left:964.0px"><span style="letter-spacing:-1.2px">SPACE</span><svg class="chev" width="8" height="6" viewBox="0 0 8 6"><path d="M0.6 0.8 L4 4.6 L7.4 0.8" fill="none" stroke="#555" stroke-width="1.6"/></svg></div><div class="ln" style="left:1082.0px">4.5</div><div class="dd" style="left:1189.0px"><span style="letter-spacing:-0.43px">DASH</span><svg class="chev" width="8" height="6" viewBox="0 0 8 6"><path d="M0.6 0.8 L4 4.6 L7.4 0.8" fill="none" stroke="#555" stroke-width="1.6"/></svg></div><div class="ln" style="left:1307.0px">6</div></div><div class="row" style="top:456.0px"><div class="cb" style="left:7.200000000000003px;top:6px"></div><div class="nm" style="left:44.5px">Elevation Swings</div><div class="dd" style="left:289.0px"><span style="letter-spacing:-0.43px">DASH</span><svg class="chev" width="8" height="6" viewBox="0 0 8 6"><path d="M0.6 0.8 L4 4.6 L7.4 0.8" fill="none" stroke="#555" stroke-width="1.6"/></svg></div><div class="ln" style="left:407.0px">2</div><div class="dd" style="left:514.0px"><span style="letter-spacing:-1.2px">SPACE</span><svg class="chev" width="8" height="6" viewBox="0 0 8 6"><path d="M0.6 0.8 L4 4.6 L7.4 0.8" fill="none" stroke="#555" stroke-width="1.6"/></svg></div><div class="ln" style="left:632.0px">1</div><div class="dd" style="left:739.0px"><span style="letter-spacing:0px"></span><svg class="chev" width="8" height="6" viewBox="0 0 8 6"><path d="M0.6 0.8 L4 4.6 L7.4 0.8" fill="none" stroke="#555" stroke-width="1.6"/></svg></div><div class="dd" style="left:964.0px"><span style="letter-spacing:0px"></span><svg class="chev" width="8" height="6" viewBox="0 0 8 6"><path d="M0.6 0.8 L4 4.6 L7.4 0.8" fill="none" stroke="#555" stroke-width="1.6"/></svg></div><div class="dd" style="left:1189.0px"><span style="letter-spacing:0px"></span><svg class="chev" width="8" height="6" viewBox="0 0 8 6"><path d="M0.6 0.8 L4 4.6 L7.4 0.8" fill="none" stroke="#555" stroke-width="1.6"/></svg></div></div><div class="row" style="top:488.5px"><div class="cb" style="left:7.200000000000003px;top:6px"></div><div class="nm" style="left:44.5px">Grid Line</div><div class="dd" style="left:289.0px"><span style="letter-spacing:-0.43px">DASH</span><svg class="chev" width="8" height="6" viewBox="0 0 8 6"><path d="M0.6 0.8 L4 4.6 L7.4 0.8" fill="none" stroke="#555" stroke-width="1.6"/></svg></div><div class="ln" style="left:407.0px">12</div><div class="dd" style="left:514.0px"><span style="letter-spacing:-1.2px">SPACE</span><svg class="chev" width="8" height="6" viewBox="0 0 8 6"><path d="M0.6 0.8 L4 4.6 L7.4 0.8" fill="none" stroke="#555" stroke-width="1.6"/></svg></div><div class="ln" style="left:632.0px">3</div><div class="dd" style="left:739.0px"><span style="letter-spacing:-0.43px">DASH</span><svg class="chev" width="8" height="6" viewBox="0 0 8 6"><path d="M0.6 0.8 L4 4.6 L7.4 0.8" fill="none" stroke="#555" stroke-width="1.6"/></svg></div><div class="ln" style="left:857.0px">3</div><div class="dd" style="left:964.0px"><span style="letter-spacing:-1.2px">SPACE</span><svg class="chev" width="8" height="6" viewBox="0 0 8 6"><path d="M0.6 0.8 L4 4.6 L7.4 0.8" fill="none" stroke="#555" stroke-width="1.6"/></svg></div><div class="ln" style="left:1082.0px">3</div><div class="dd" style="left:1189.0px"><span style="letter-spacing:0px"></span><svg class="chev" width="8" height="6" viewBox="0 0 8 6"><path d="M0.6 0.8 L4 4.6 L7.4 0.8" fill="none" stroke="#555" stroke-width="1.6"/></svg></div></div><div class="row" style="top:521.0px"><div class="cb" style="left:7.200000000000003px;top:6px"></div><div class="nm" style="left:44.5px">Hidden</div><div class="dd" style="left:289.0px"><span style="letter-spacing:-0.43px">DASH</span><svg class="chev" width="8" height="6" viewBox="0 0 8 6"><path d="M0.6 0.8 L4 4.6 L7.4 0.8" fill="none" stroke="#555" stroke-width="1.6"/></svg></div><div class="ln" style="left:407.0px">4</div><div class="dd" style="left:514.0px"><span style="letter-spacing:-1.2px">SPACE</span><svg class="chev" width="8" height="6" viewBox="0 0 8 6"><path d="M0.6 0.8 L4 4.6 L7.4 0.8" fill="none" stroke="#555" stroke-width="1.6"/></svg></div><div class="ln" style="left:632.0px">2</div><div class="dd" style="left:739.0px"><span style="letter-spacing:0px"></span><svg class="chev" width="8" height="6" viewBox="0 0 8 6"><path d="M0.6 0.8 L4 4.6 L7.4 0.8" fill="none" stroke="#555" stroke-width="1.6"/></svg></div><div class="dd" style="left:964.0px"><span style="letter-spacing:0px"></span><svg class="chev" width="8" height="6" viewBox="0 0 8 6"><path d="M0.6 0.8 L4 4.6 L7.4 0.8" fill="none" stroke="#555" stroke-width="1.6"/></svg></div><div class="dd" style="left:1189.0px"><span style="letter-spacing:0px"></span><svg class="chev" width="8" height="6" viewBox="0 0 8 6"><path d="M0.6 0.8 L4 4.6 L7.4 0.8" fill="none" stroke="#555" stroke-width="1.6"/></svg></div></div><div class="row" style="top:553.5px"><div class="cb" style="left:7.200000000000003px;top:6px"></div><div class="nm" style="left:44.5px">Hidden2</div><div class="dd" style="left:289.0px"><span style="letter-spacing:-0.43px">DASH</span><svg class="chev" width="8" height="6" viewBox="0 0 8 6"><path d="M0.6 0.8 L4 4.6 L7.4 0.8" fill="none" stroke="#555" stroke-width="1.6"/></svg></div><div class="ln" style="left:407.0px">2</div><div class="dd" style="left:514.0px"><span style="letter-spacing:-1.2px">SPACE</span><svg class="chev" width="8" height="6" viewBox="0 0 8 6"><path d="M0.6 0.8 L4 4.6 L7.4 0.8" fill="none" stroke="#555" stroke-width="1.6"/></svg></div><div class="ln" style="left:632.0px">1</div><div class="dd" style="left:739.0px"><span style="letter-spacing:0px"></span><svg class="chev" width="8" height="6" viewBox="0 0 8 6"><path d="M0.6 0.8 L4 4.6 L7.4 0.8" fill="none" stroke="#555" stroke-width="1.6"/></svg></div><div class="dd" style="left:964.0px"><span style="letter-spacing:0px"></span><svg class="chev" width="8" height="6" viewBox="0 0 8 6"><path d="M0.6 0.8 L4 4.6 L7.4 0.8" fill="none" stroke="#555" stroke-width="1.6"/></svg></div><div class="dd" style="left:1189.0px"><span style="letter-spacing:0px"></span><svg class="chev" width="8" height="6" viewBox="0 0 8 6"><path d="M0.6 0.8 L4 4.6 L7.4 0.8" fill="none" stroke="#555" stroke-width="1.6"/></svg></div></div>
</div>
<!-- scrollbars -->
<div class="abs" style="left:1430px;top:826px;width:18px;height:16px;background:#fff"></div>
<div class="abs" style="left:36px;top:832px;width:1402px;height:10px;background:#ededed;border-radius:0 5px 5px 0"></div>
<div class="abs" style="left:36px;top:832.3px;width:1044.5px;height:9.7px;background:#8b8b8b;border-radius:5px"></div>
<div class="abs" style="left:1438.2px;top:257px;width:9.5px;height:574.6px;background:#ededed;border-radius:0 0 4.75px 4.75px"></div>
<div class="abs" style="left:1438.6px;top:258.3px;width:9.2px;height:404.7px;background:#8b8b8b;border-radius:4.6px"></div>
<svg class="abs" style="left:1465px;top:919px" width="17" height="16" viewBox="0 0 17 16"><rect x="13" y="1.6" width="2" height="2" fill="#c3c9d9"/><rect x="9.4" y="5.3" width="2" height="2" fill="#c3c9d9"/><rect x="13" y="5.3" width="2" height="2" fill="#c3c9d9"/><rect x="5.4" y="9" width="2" height="2" fill="#c3c9d9"/><rect x="9.4" y="9" width="2" height="2" fill="#c3c9d9"/><rect x="13" y="9" width="2" height="2" fill="#c3c9d9"/><rect x="1.7" y="12.5" width="2" height="2" fill="#c3c9d9"/><rect x="5.4" y="12.5" width="2" height="2" fill="#c3c9d9"/><rect x="9.4" y="12.5" width="2" height="2" fill="#c3c9d9"/><rect x="13" y="12.5" width="2" height="2" fill="#c3c9d9"/></svg>

<!-- status -->
<div class="st" style="left:39.8px">No object styles loaded yet</div>
<div class="st" style="left:1246.3px;font-size:14.3px">Selected: 0</div>
<div class="st" style="left:1330.6px;font-size:14.7px">Total: 25 patterns</div>
</body></html>
